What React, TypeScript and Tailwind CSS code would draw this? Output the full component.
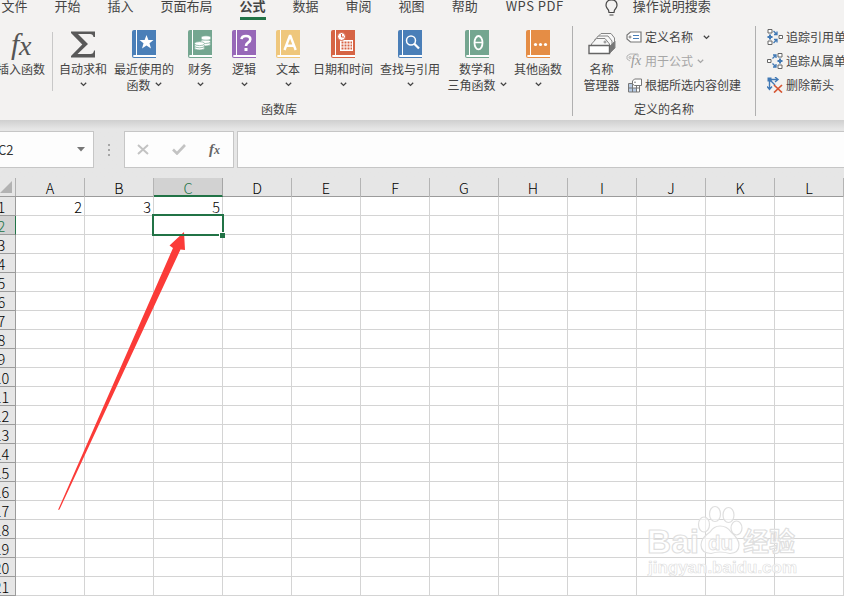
import React from "react";

const Chevron = ({ className = "" }: { className?: string }) => (
  <svg width="7" height="5" viewBox="0 0 7 5" className={className} fill="none" stroke="currentColor" strokeWidth="1.3">
    <path d="M0.8 0.8L3.5 3.4L6.2 0.8" />
  </svg>
);

const Book = ({ color, children }: { color: string; children: React.ReactNode }) => (
  <svg width="24" height="28" viewBox="0 0 24 28" className="shrink-0">
    <path d="M2 0H24V28H2Q0 28 0 26V2Q0 0 2 0Z" fill={color} />
    <path d="M4 0H5V25H24V27H2.5Q1 27 1 26Q1 25 2.5 25H4Z" fill="#fff" />
    {children}
  </svg>
);

const books = {
  recent: (
    <Book color="#4a7fb8">
      <path d="M14.5 5L16.4 10H21.5L17.5 13.3L19 18.5L14.5 15.4L10 18.5L11.5 13.3L7.5 10H12.6Z" fill="#fff" />
    </Book>
  ),
  money: (
    <Book color="#74a690">
      <g fill="#fff" stroke="#74a690" strokeWidth="0.7">
        <ellipse cx="17.5" cy="14" rx="5" ry="2" />
        <ellipse cx="17.5" cy="11.5" rx="5" ry="2" />
        <ellipse cx="18" cy="8" rx="5" ry="2.2" />
        <ellipse cx="11.5" cy="18" rx="5" ry="2" />
        <ellipse cx="11.5" cy="15.8" rx="5" ry="2" />
        <ellipse cx="11.5" cy="13.6" rx="5" ry="2" />
      </g>
    </Book>
  ),
  logic: (
    <Book color="#9768b8">
      <path d="M9.5 9.2Q9.8 6 14 6Q18.3 6 18.3 9.3Q18.3 11.3 16 12.7Q14 13.9 14 16" fill="none" stroke="#fff" strokeWidth="2.6" />
      <rect x="12.5" y="18" width="3" height="3" fill="#fff" />
    </Book>
  ),
  text: (
    <Book color="#efc77c">
      <path d="M8.5 20L13.8 6H14.4L19.7 20M10.3 15.8H18" fill="none" stroke="#fff" strokeWidth="2.4" />
    </Book>
  ),
  date: (
    <Book color="#d66445">
      <path d="M9 10H22V21H9Z" fill="#fff" />
      <path d="M10.5 12.5H21M10.5 15.5H21M10.5 18.5H21" stroke="#d66445" strokeWidth="2" strokeDasharray="2 1" />
      <circle cx="10.5" cy="6.5" r="4" fill="#fff" stroke="#d66445" strokeWidth="1" />
      <path d="M10.5 4V7H13" fill="none" stroke="#d66445" />
    </Book>
  ),
  lookup: (
    <Book color="#4a7fb8">
      <circle cx="13" cy="10.5" r="4.5" fill="none" stroke="#fff" strokeWidth="1.5" />
      <path d="M16 13.5L21 18.5" stroke="#fff" strokeWidth="2.3" />
    </Book>
  ),
  math: (
    <Book color="#74a690">
      <ellipse cx="13.5" cy="12.7" rx="4" ry="6.7" fill="none" stroke="#fff" strokeWidth="1.8" />
      <path d="M9.5 12.5H17.5" stroke="#fff" strokeWidth="1.5" />
    </Book>
  ),
  more: (
    <Book color="#e58d45">
      <g fill="#fff">
        <circle cx="9.5" cy="14.5" r="1.6" />
        <circle cx="14.5" cy="14.5" r="1.6" />
        <circle cx="19.5" cy="14.5" r="1.6" />
      </g>
    </Book>
  ),
};

const Big = ({ width, icon, line1, line2, arrow = true }: { width: string; icon: React.ReactNode; line1: string; line2?: string; arrow?: boolean }) => (
  <div className={`flex shrink-0 flex-col items-center whitespace-nowrap pt-[7px] ${width}`}>
    <div className="flex h-[28px] items-center">{icon}</div>
    <div className="mt-[3px] h-[16px] leading-[15px]">{line1}</div>
    <div className="flex h-[15px] items-center gap-1 leading-[15px]">
      {line2}
      {arrow && <Chevron className={line2 ? "" : "ml-px"} />}
    </div>
  </div>
);

const Sigma = () => (
  <svg width="24" height="27" viewBox="0 0 24 27">
    <path d="M0 0.5H24V6H22.5Q22 3 19 3H7L17 13L6.5 23H19.5Q22.5 23 23 19.5H24V26.5H0V25L11.3 13.5L0 2Z" fill="#595959" />
  </svg>
);

const NameManager = () => (
  <svg width="28" height="24" viewBox="0 0 28 24" fill="#f8f8f8" stroke="#858585" strokeWidth="1">
    <path d="M9.5 5L13 1.5H23L26.5 6V14L23 18Z" />
    <path d="M6.5 8L10.5 4H20L24 9V17H8Z" />
    <path d="M3.5 12L8.5 6.5H17L21.5 12V16H3.5Z" />
    <circle cx="17" cy="10" r="1" />
    <path d="M22 14L27 9V16L22 21Z" fill="#777" />
    <path d="M1 13.5H21.5V21.5H1Z" fill="#fff" stroke="#666" strokeWidth="1.4" />
  </svg>
);

const DefineIcon = () => (
  <svg width="16" height="12" viewBox="0 0 16 12" fill="none">
    <path d="M4.5 1H15V11H4.5L1 8V4Z" fill="#fff" stroke="#777" strokeWidth="1.2" />
    <circle cx="4" cy="6" r="1" stroke="#777" />
    <path d="M7 4.5H13M7 7.5H13" stroke="#4a7fb8" strokeWidth="1.2" />
  </svg>
);

const UseIcon = () => (
  <span className="relative block h-[16px] w-[16px]">
    <svg width="16" height="16" viewBox="0 0 16 16" fill="none" stroke="#b5b5b5">
      <path d="M4 8L1 6V3L4 1H12V4" />
      <circle cx="4" cy="4.5" r="1" />
    </svg>
    <span className="absolute left-[5px] top-[1px] font-['Liberation_Serif',serif] text-[14px] italic leading-[14px] text-[#999]">fx</span>
  </span>
);

const CreateIcon = () => (
  <svg width="14" height="15" viewBox="0 0 14 15" fill="none" className="ml-[2px]">
    <path d="M0.5 5.5H11.5V14H0.5Z" fill="#fff" />
    <path d="M1 6H5V14H1ZM5 10H9V14H5Z" fill="#b7cbe4" />
    <path d="M0.5 5.5H11.5V14H0.5ZM0.5 10H11.5M4.5 5.5V14M8.5 5.5V14" stroke="#777" />
    <path d="M6.5 1H13.5V7.5H6.5L4.5 6V3Z" fill="#fff" stroke="#777" />
    <circle cx="7" cy="4.2" r="0.8" fill="#777" />
  </svg>
);

const TraceIcon = ({ flip = false }: { flip?: boolean }) => (
  <svg width="16" height="16" viewBox="0 0 16 16" fill="none" className={flip ? "-scale-x-100" : ""}>
    <path d="M1 0.5H5V4H1ZM1 12H5V15.5H1ZM12 6.5H15.5V9.5H12Z" fill="#fff" stroke="#666" />
    <path d="M3 5.5V10.5M0.5 8H5.5" stroke="#4179b5" strokeWidth="2" />
    <path
      d={flip ? "M10.5 5.500L7 2M7 5V2H10M10.500 10.500L7 14M7 11V14H10" : "M6.500 2L10 5.500M10 2.500V5.500H7M6.500 14L10 10.500M7 10.500H10V13.500"}
      stroke="#4179b5"
      strokeWidth="1.3"
    />
  </svg>
);

const RemoveIcon = () => (
  <svg width="16" height="16" viewBox="0 0 16 16" fill="none">
    <path d="M2.5 2.5H11M8 0L11 2.5L8 5M2.5 2.5V12M0 9.5L2.5 12.5L5 9.5M3 3L8 8" stroke="#4179b5" strokeWidth="1.4" />
    <rect x="0.5" y="0.5" width="4" height="4" fill="#4179b5" />
    <path d="M7 8L15 15.5M15 8L7 15.5" stroke="#d65532" strokeWidth="1.7" />
  </svg>
);

const tabs = ["文件", "开始", "插入", "页面布局", "公式", "数据", "审阅", "视图", "帮助", "WPS PDF"];
const cols = "ABCDEFGHIJKL".split("");
const rows = Array.from({ length: 21 }, (_, i) => i + 1);
const values: Record<string, string> = { A1: "2", B1: "3", C1: "5" };

const Small = ({ icon, text, children, dim = false }: { icon: React.ReactNode; text: string; children?: React.ReactNode; dim?: boolean }) => (
  <div className={`flex h-[24px] items-center whitespace-nowrap ${dim ? "text-[#a6a6a6]" : ""}`}>
    <span className="flex w-[19px] shrink-0">{icon}</span>
    {text}
    {children}
  </div>
);

const Ribbon = () => (
  <div className="h-[120px] bg-[#f3f2f1] text-[#444]">
    <div className="flex h-[23px] gap-[27px] whitespace-nowrap pl-[1.5px] text-[13px] leading-[11px]">
      {tabs.map((t) => (
        <div
          key={t}
          className={`flex h-[20px] shrink-0 items-start ${t === "公式" ? "border-b-[3px] border-[#217346] font-bold text-[#444]" : ""} ${t === "WPS PDF" ? "pl-px tracking-[0.5px]" : ""}`}
        >
          {t}
        </div>
      ))}
      <div className="ml-[14px] flex items-start gap-[15px]">
        <svg width="13" height="17" viewBox="0 0 13 17" fill="none" stroke="#444" strokeWidth="1.2">
          <path d="M4 12.5Q4 10 2.3 8.5Q1 7 1 5.3Q1 0 6.5 0Q12 0 12 5.3Q12 7 10.7 8.5Q9 10 9 12.5ZM4.5 15H8.5" />
        </svg>
        操作说明搜索
      </div>
    </div>
    <div className="flex text-[12px]">
      <div className="relative flex h-[97px] w-[572px] shrink-0">
        <div className="-ml-[10px] flex">
          <Big
            width="w-[62px]"
            icon={
              <span className="font-['Liberation_Serif',serif] text-[30px] italic leading-none tracking-[-0.5px] text-[#555]">
                f<span className="relative top-px text-[28px]">x</span>
              </span>
            }
            line1="插入函数"
            arrow={false}
          />
        </div>
        <div className="mt-[9px] h-[59px] w-px bg-[#c8c8c8]" />
        <Big width="w-[60px]" icon={<Sigma />} line1="自动求和" />
        <Big width="w-[62px]" icon={books.recent} line1="最近使用的" line2="函数" />
        <div className="w-[3px]" />
        <Big width="w-[44px]" icon={books.money} line1="财务" />
        <Big width="w-[44px]" icon={books.logic} line1="逻辑" />
        <Big width="w-[44px]" icon={books.text} line1="文本" />
        <Big width="w-[66px]" icon={books.date} line1="日期和时间" />
        <Big width="w-[68px]" icon={books.lookup} line1="查找与引用" />
        <Big width="w-[66px]" icon={books.math} line1="数学和" line2="三角函数" />
        <Big width="w-[56px]" icon={books.more} line1="其他函数" />
        <div className="absolute left-[261px] top-[78px] leading-[15px]">函数库</div>
      </div>
      <div className="mt-[3px] h-[90px] w-px shrink-0 bg-[#b0b0b0]" />
      <div className="flex h-[97px] w-[182px] shrink-0 flex-col">
        <div className="flex h-[76px]">
          <div className="pl-[4px]">
            <Big width="w-[49px]" icon={<NameManager />} line1="名称" line2="管理器" arrow={false} />
          </div>
          <div className="pt-[2px]">
            <Small icon={<DefineIcon />} text="定义名称"><Chevron className="ml-[10px]" /></Small>
            <Small icon={<UseIcon />} text="用于公式" dim><Chevron className="ml-[4px]" /></Small>
            <Small icon={<CreateIcon />} text="根据所选内容创建" />
          </div>
        </div>
        <div className="pt-[2px] text-center leading-[15px]">定义的名称</div>
      </div>
      <div className="mt-[3px] h-[90px] w-px shrink-0 bg-[#b0b0b0]" />
      <div className="shrink-0 pl-[11px] pt-[2px]">
        <Small icon={<TraceIcon />} text="追踪引用单元格" />
        <Small icon={<TraceIcon flip />} text="追踪从属单元格" />
        <Small icon={<RemoveIcon />} text="删除箭头" />
      </div>
    </div>
  </div>
);

const FormulaBar = () => (
  <div className="flex h-[58px] bg-[#e6e6e6] bg-linear-to-b from-[#cfcfcf] to-[#e6e6e6] to-[9px] pt-[11px]">
    <div className="flex h-[37px] w-[94px] items-center justify-between border border-l-0 border-[#c6c6c6] bg-[#fdfdfd] pr-2 text-[13px] text-[#333]">
      <span className="-ml-[2px]">C2</span>
      <svg width="8" height="5" viewBox="0 0 8 5"><path d="M0 0H8L4 4.5Z" fill="#777" /></svg>
    </div>
    <div className="flex h-[37px] w-[30px] flex-col items-center justify-center gap-[3px]">
      {[0, 1, 2].map((i) => <i key={i} className="h-[2px] w-[2px] bg-[#a6a6a6]" />)}
    </div>
    <div className="flex h-[37px] w-[110px] items-center border border-[#c6c6c6] bg-[#fdfdfd] pl-[12px]">
      <svg width="12" height="11" viewBox="0 0 12 11" stroke="#c3c3c3" strokeWidth="2"><path d="M1 1L11 10M11 1L1 10" /></svg>
      <svg width="14" height="11" viewBox="0 0 14 11" fill="none" stroke="#c3c3c3" strokeWidth="2.6" className="ml-[23px]"><path d="M1 5.5L5 9.5L13 1" /></svg>
      <span className="ml-[23px] font-['Liberation_Serif',serif] text-[15px] font-bold italic leading-none text-[#666]">f<span className="text-[12px]">x</span></span>
    </div>
    <div className="ml-[3px] h-[37px] grow border border-r-0 border-[#c6c6c6] bg-[#fdfdfd]" />
  </div>
);

const Sheet = () => (
  <div className="relative w-[844px] font-['Noto_Sans_CJK_SC',sans-serif] text-[14.5px] font-light text-black">
    <div className="flex h-[19px] border-b border-[#9b9b9b] bg-[#e6e6e6]">
      <div className="flex w-[16px] shrink-0 items-end border-r border-[#b0b0b0] pb-[3px]">
        <svg width="12" height="12" viewBox="0 0 12 12"><path d="M12 0V12H0Z" fill="#b2b2b2" /></svg>
      </div>
      {cols.map((c) => (
        <div key={c} className={`h-[19px] w-[69px] shrink-0 border-r text-center leading-[19px] ${c === "C" ? "border-b-2 border-r-[#a6a6a6] border-b-[#217346] bg-[#d2d2d2] text-[#217346]" : "border-[#b4b4b4]"}`}>{c}</div>
      ))}
    </div>
    {rows.map((r) => (
      <div key={r} className="flex h-[19px] leading-[19px]">
        <div className={`flex w-[16px] shrink-0 justify-end overflow-hidden border-b border-r ${r === 2 ? "border-b-[#9b9b9b] border-r-[#217346] bg-[#d2d2d2] text-[#217346]" : "border-[#9b9b9b] bg-[#e6e6e6]"}`}>
          <span className="w-[27px] shrink-0 text-center">{r}</span>
        </div>
        {cols.map((c) => (
          <div key={c} className="relative w-[69px] shrink-0 border-b border-r border-[#d4d4d4] pr-[2px] text-right">
            {values[c + r]}
            {c === "C" && r === 2 && (
              <div className="absolute -left-[2px] -top-[2px] z-10 h-[22px] w-[72px] border-2 border-[#217346]">
                <i className="absolute -bottom-[4px] -right-[3px] h-[6px] w-[6px] border-l border-t border-white bg-[#217346]" />
              </div>
            )}
          </div>
        ))}
      </div>
    ))}
  </div>
);

const Watermark = () => (
  <svg width="160" height="76" viewBox="0 0 160 76" className="absolute left-[644px] top-[504px]" fill="#fff" fillOpacity="0.6" stroke="#dfdfdf" strokeWidth="1.2" strokeLinejoin="round">
    <ellipse cx="60" cy="20.5" rx="5.5" ry="7.5" />
    <ellipse cx="71" cy="10" rx="5.5" ry="7.5" />
    <ellipse cx="84.5" cy="11" rx="5.5" ry="7.5" />
    <ellipse cx="92.5" cy="24" rx="5.5" ry="7" />
    <path d="M76 22Q70 22 66 28Q57 34 57 41Q57 49 67 49.5Q72 48 76 48Q80 48 86 49.5Q95 49 95 41Q95 35 87 28Q83 22 76 22Z" />
    <text x="3" y="49" fontFamily="Liberation Sans" fontWeight="bold" fontSize="34" textLength="52" lengthAdjust="spacingAndGlyphs">Bai</text>
    <text x="64" y="46" fontFamily="Liberation Sans" fontWeight="bold" fontSize="21" strokeWidth="0.9" textLength="25" lengthAdjust="spacingAndGlyphs">du</text>
    <text x="99" y="47" fontFamily="Noto Sans CJK SC" fontWeight="bold" fontSize="26" textLength="52">经验</text>
    <text x="4" y="69" fontFamily="Liberation Sans" fontSize="17" fontWeight="bold" strokeWidth="0.7" textLength="149" lengthAdjust="spacingAndGlyphs">jingyan.baidu.com</text>
  </svg>
);

export default function App() {
  return (
    <div className="relative h-[597px] w-[844px] overflow-hidden bg-white font-['Noto_Sans_CJK_SC',sans-serif]">
      <Ribbon />
      <FormulaBar />
      <Sheet />
      <Watermark />
      <svg width="140" height="285" viewBox="0 0 140 285" className="absolute left-[54px] top-[229px]">
        <path d="M4 281L119 19L115.5 16.5L130 3L131 21L126.5 20.5L5.5 280.5Z" fill="#fb3b38" />
      </svg>
    </div>
  );
}
